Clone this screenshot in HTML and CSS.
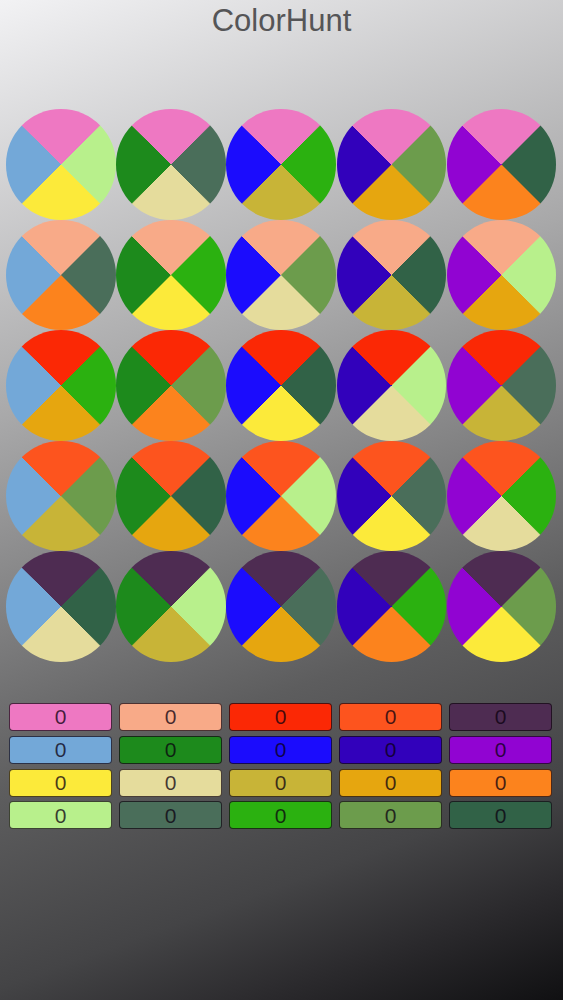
FILE: index.html
```html
<!DOCTYPE html>
<html>
<head>
<meta charset="utf-8">
<title>ColorHunt</title>
<link rel="stylesheet" href="styles.css">
</head>
<body>
<div class="screen">
  <h1 class="title">ColorHunt</h1>
  <div class="wheels">
    <div class="cell"><div class="wheel t-pink l-sky r-mint b-yellow"></div></div>
    <div class="cell"><div class="wheel t-pink l-green r-sage b-cream"></div></div>
    <div class="cell"><div class="wheel t-pink l-blue r-lime b-olive"></div></div>
    <div class="cell"><div class="wheel t-pink l-indigo r-moss b-amber"></div></div>
    <div class="cell"><div class="wheel t-pink l-violet r-pine b-orange"></div></div>

    <div class="cell"><div class="wheel t-salmon l-sky r-sage b-orange"></div></div>
    <div class="cell"><div class="wheel t-salmon l-green r-lime b-yellow"></div></div>
    <div class="cell"><div class="wheel t-salmon l-blue r-moss b-cream"></div></div>
    <div class="cell"><div class="wheel t-salmon l-indigo r-pine b-olive"></div></div>
    <div class="cell"><div class="wheel t-salmon l-violet r-mint b-amber"></div></div>

    <div class="cell"><div class="wheel t-red l-sky r-lime b-amber"></div></div>
    <div class="cell"><div class="wheel t-red l-green r-moss b-orange"></div></div>
    <div class="cell"><div class="wheel t-red l-blue r-pine b-yellow"></div></div>
    <div class="cell"><div class="wheel t-red l-indigo r-mint b-cream"></div></div>
    <div class="cell"><div class="wheel t-red l-violet r-sage b-olive"></div></div>

    <div class="cell"><div class="wheel t-tomato l-sky r-moss b-olive"></div></div>
    <div class="cell"><div class="wheel t-tomato l-green r-pine b-amber"></div></div>
    <div class="cell"><div class="wheel t-tomato l-blue r-mint b-orange"></div></div>
    <div class="cell"><div class="wheel t-tomato l-indigo r-sage b-yellow"></div></div>
    <div class="cell"><div class="wheel t-tomato l-violet r-lime b-cream"></div></div>

    <div class="cell"><div class="wheel t-plum l-sky r-pine b-cream"></div></div>
    <div class="cell"><div class="wheel t-plum l-green r-mint b-olive"></div></div>
    <div class="cell"><div class="wheel t-plum l-blue r-sage b-amber"></div></div>
    <div class="cell"><div class="wheel t-plum l-indigo r-lime b-orange"></div></div>
    <div class="cell"><div class="wheel t-plum l-violet r-moss b-yellow"></div></div>
  </div>

  <div class="swatches">
    <div class="swatch bg-pink">0</div>
    <div class="swatch bg-salmon">0</div>
    <div class="swatch bg-red">0</div>
    <div class="swatch bg-tomato">0</div>
    <div class="swatch bg-plum">0</div>

    <div class="swatch bg-sky">0</div>
    <div class="swatch bg-green">0</div>
    <div class="swatch bg-blue">0</div>
    <div class="swatch bg-indigo">0</div>
    <div class="swatch bg-violet">0</div>

    <div class="swatch bg-yellow">0</div>
    <div class="swatch bg-cream">0</div>
    <div class="swatch bg-olive">0</div>
    <div class="swatch bg-amber">0</div>
    <div class="swatch bg-orange">0</div>

    <div class="swatch bg-mint">0</div>
    <div class="swatch bg-sage">0</div>
    <div class="swatch bg-lime">0</div>
    <div class="swatch bg-moss">0</div>
    <div class="swatch bg-pine">0</div>
  </div>
</div>
</body>
</html>
```

FILE: styles.css
```css
:root {
  --pink: #ee78c2;
  --salmon: #f8aa88;
  --red: #fb2805;
  --tomato: #fd541e;
  --plum: #4e2c52;
  --sky: #73a8d8;
  --green: #1d8a1c;
  --blue: #1b0cfd;
  --indigo: #3201bb;
  --violet: #9104d2;
  --yellow: #fcea3a;
  --cream: #e5dc9c;
  --olive: #c8b437;
  --amber: #e6a60f;
  --orange: #fc831d;
  --mint: #b8f08c;
  --sage: #4a6e5a;
  --lime: #2bb110;
  --moss: #6c9c4c;
  --pine: #316247;
}

* { box-sizing: border-box; }

html, body {
  margin: 0;
  padding: 0;
}

body {
  width: 563px;
  height: 1000px;
  overflow: hidden;
  font-family: "Liberation Sans", Arial, sans-serif;
}

.screen {
  width: 563px;
  height: 1000px;
  background: linear-gradient(160deg,
    #f2f2f4 0%,
    #a8a8a9 35%,
    #5d5d5e 66%,
    #444446 82%,
    #2a292c 91%,
    #101012 100%);
  display: flex;
  flex-direction: column;
  align-items: flex-start;
}

.title {
  align-self: stretch;
  margin: 0;
  font-size: 31px;
  font-weight: normal;
  line-height: 41px;
  color: #555557;
  text-align: center;
}

.wheels {
  margin-top: 68px;
  padding-left: 6px;
  display: grid;
  grid-template-columns: repeat(5, 110.2px);
  grid-auto-rows: 110.6px;
}

.cell {
  display: flex;
  align-items: flex-start;
  justify-content: flex-start;
}

.wheel {
  width: 109.5px;
  height: 110.5px;
  border-radius: 50%;
  background: conic-gradient(from -45deg,
    var(--t) 0deg 89.4deg,
    var(--r) 90.6deg 179.4deg,
    var(--b) 180.6deg 269.4deg,
    var(--l) 270.6deg 359.4deg,
    var(--t) 360deg);
}

.t-pink { --t: var(--pink); }
.t-salmon { --t: var(--salmon); }
.t-red { --t: var(--red); }
.t-tomato { --t: var(--tomato); }
.t-plum { --t: var(--plum); }

.l-sky { --l: var(--sky); }
.l-green { --l: var(--green); }
.l-blue { --l: var(--blue); }
.l-indigo { --l: var(--indigo); }
.l-violet { --l: var(--violet); }

.b-yellow { --b: var(--yellow); }
.b-cream { --b: var(--cream); }
.b-olive { --b: var(--olive); }
.b-amber { --b: var(--amber); }
.b-orange { --b: var(--orange); }

.r-mint { --r: var(--mint); }
.r-sage { --r: var(--sage); }
.r-lime { --r: var(--lime); }
.r-moss { --r: var(--moss); }
.r-pine { --r: var(--pine); }

.swatches {
  margin-top: 41px;
  padding-left: 9px;
  display: grid;
  grid-template-columns: repeat(5, 103px);
  grid-auto-rows: 28px;
  column-gap: 7px;
  row-gap: 4.8px;
}

.swatch {
  border: 1px solid rgba(20, 10, 20, 0.75);
  border-radius: 4px;
  display: flex;
  align-items: center;
  justify-content: center;
  font-size: 21px;
  line-height: 1;
  color: rgba(10, 0, 15, 0.75);
}

.bg-pink { background: var(--pink); }
.bg-salmon { background: var(--salmon); }
.bg-red { background: var(--red); }
.bg-tomato { background: var(--tomato); }
.bg-plum { background: var(--plum); }
.bg-sky { background: var(--sky); }
.bg-green { background: var(--green); }
.bg-blue { background: var(--blue); }
.bg-indigo { background: var(--indigo); }
.bg-violet { background: var(--violet); }
.bg-yellow { background: var(--yellow); }
.bg-cream { background: var(--cream); }
.bg-olive { background: var(--olive); }
.bg-amber { background: var(--amber); }
.bg-orange { background: var(--orange); }
.bg-mint { background: var(--mint); }
.bg-sage { background: var(--sage); }
.bg-lime { background: var(--lime); }
.bg-moss { background: var(--moss); }
.bg-pine { background: var(--pine); }
```
